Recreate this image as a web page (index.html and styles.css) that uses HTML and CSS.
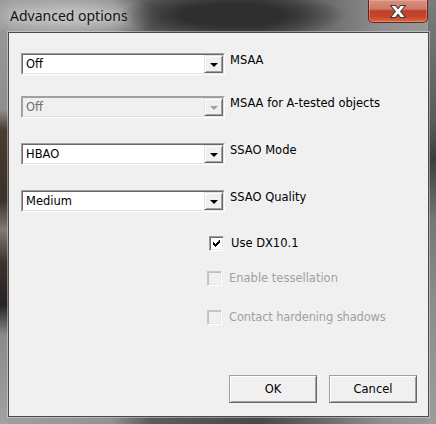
FILE: index.html
```html
<!DOCTYPE html>
<html>
<head>
<meta charset="utf-8">
<link rel="stylesheet" href="styles.css">
</head>
<body>
<div class="window">
  <div class="titlebar">
    <span class="title">Advanced options</span>
    <div class="close">
      <svg width="18" height="15" viewBox="0 0 18 15"><path d="M1.5 1.5 H6.5 L9 4.6 L11.5 1.5 H16.5 L11.6 7.5 L16.5 13.5 H11.5 L9 10.4 L6.5 13.5 H1.5 L6.4 7.5 Z" fill="#fff" stroke="#3a3a3a" stroke-width="1.1" stroke-linejoin="round"/></svg>
    </div>
  </div>
  <div class="client">
    <div class="row r1">
      <div class="combo"><div class="combo-in"><span class="value">Off</span><span class="drop"><span class="tri"></span></span></div></div>
      <span class="label">MSAA</span>
    </div>
    <div class="row r2">
      <div class="combo disabled"><div class="combo-in"><span class="value">Off</span><span class="drop"><span class="tri"></span></span></div></div>
      <span class="label">MSAA for A-tested objects</span>
    </div>
    <div class="row r3">
      <div class="combo"><div class="combo-in"><span class="value">HBAO</span><span class="drop"><span class="tri"></span></span></div></div>
      <span class="label">SSAO Mode</span>
    </div>
    <div class="row r4">
      <div class="combo"><div class="combo-in"><span class="value">Medium</span><span class="drop"><span class="tri"></span></span></div></div>
      <span class="label">SSAO Quality</span>
    </div>
    <div class="check c1">
      <span class="box"><svg width="7" height="7" viewBox="0 0 7 7"><path d="M6 0h1v3h-1v1h-1v1h-1v1h-1v1h-1v-1h-1v-1h-1v-3h1v1h1v1h1v-1h1v-1h1z" fill="#000"/></svg></span>
      <span class="ctext">Use DX10.1</span>
    </div>
    <div class="check c2 off">
      <span class="box"></span>
      <span class="ctext">Enable tessellation</span>
    </div>
    <div class="check c3 off">
      <span class="box"></span>
      <span class="ctext">Contact hardening shadows</span>
    </div>
    <div class="buttons">
      <div class="btn">OK</div>
      <div class="btn">Cancel</div>
    </div>
  </div>
</div>
</body>
</html>
```
FILE: styles.css
```css
html, body {
  margin: 0;
  padding: 0;
  background: #8a8a8a;
}
.window {
  width: 436px;
  height: 424px;
  box-sizing: border-box;
  padding: 0 7px 7px 8px;
  display: flex;
  flex-direction: column;
  background:
    radial-gradient(ellipse 115px 24px at 232px 15px, #2f2f2f 45%, rgba(47,47,47,0) 100%),
    radial-gradient(ellipse 95px 22px at 68px 16px, rgba(190,190,190,0.85) 30%, rgba(190,190,190,0) 100%),
    linear-gradient(to bottom, #9a9a9a 0, #8e8e8e 110px, #4a3d31 130px, #3b3128 200px, #7f7a74 230px, #3b3430 262px, #262322 305px, #8a8a8a 335px, #a2a2a2 100%) left top / 8px 100% no-repeat,
    linear-gradient(to bottom, #7c7c7c 0, #5b5b5b 120px, #3d3d3d 160px, #767676 220px, #8c8c8c 300px, #9c9c9c 100%) right top / 8px 100% no-repeat,
    linear-gradient(to right, #9f9f9f 0, #929292 110px, #5c5c5c 150px, #474747 260px, #6e6e6e 330px, #8e8e8e 380px, #9a9a9a 100%);
}
.titlebar {
  height: 32px;
  display: flex;
  align-items: flex-start;
  margin-left: -8px;
  margin-right: -7px;
}
.title {
  font-family: "Noto Sans", "Open Sans", sans-serif;
  font-size: 14px;
  color: #141414;
  margin-left: 10px;
  margin-top: 6px;
  line-height: 19px;
  text-shadow: 0 0 8px rgba(255,255,255,0.7);
}
.close {
  margin-left: auto;
  margin-right: 8px;
  width: 60px;
  height: 23px;
  box-sizing: border-box;
  border: 1px solid #5a2a20;
  border-top: none;
  border-radius: 0 0 5px 5px;
  background: linear-gradient(to bottom, #d9907f 0%, #cf7a68 40%, #bd3f27 50%, #c4452c 75%, #e0673e 100%);
  box-shadow: inset 0 0 0 1px rgba(255,200,190,0.35);
  display: flex;
  align-items: center;
  justify-content: center;
}
.close svg { display: block; }
.client {
  flex: 1;
  background: #f0f0f0;
  border: 1px solid #4b4b4b;
  box-shadow: 0 0 0 1px rgba(230,230,230,0.45);
  display: flex;
  flex-direction: column;
  font-family: "DejaVu Sans", Verdana, sans-serif;
  font-size: 11.5px;
  color: #000;
}
.row {
  display: flex;
  align-items: flex-start;
  margin-left: 12px;
}
.r1 { margin-top: 20px; }
.r2 { margin-top: 21px; }
.r3 { margin-top: 25px; }
.r4 { margin-top: 25px; }
.combo {
  width: 204px;
  height: 22px;
  box-sizing: border-box;
  border-top: 1px solid #a0a0a0;
  border-left: 1px solid #a0a0a0;
  border-right: 1px solid #ffffff;
  border-bottom: 1px solid #ffffff;
}
.combo-in {
  height: 100%;
  box-sizing: border-box;
  border-top: 1px solid #696969;
  border-left: 1px solid #696969;
  border-right: 1px solid #e3e3e3;
  border-bottom: 1px solid #e3e3e3;
  background: #fff;
  display: flex;
  align-items: center;
}
.value {
  flex: 1;
  padding-left: 3px;
  line-height: 18px;
}
.drop {
  width: 19px;
  height: 100%;
  box-sizing: border-box;
  background: #f0f0f0;
  border-top: 1px solid #e3e3e3;
  border-left: 1px solid #e3e3e3;
  border-right: 1px solid #696969;
  border-bottom: 1px solid #696969;
  box-shadow: inset 1px 1px 0 #fff, inset -1px -1px 0 #a0a0a0;
  display: flex;
  align-items: center;
  justify-content: center;
}
.tri {
  width: 0;
  height: 0;
  border-left: 4px solid transparent;
  border-right: 4px solid transparent;
  border-top: 4px solid #000;
  margin-top: 1px;
}
.disabled .combo-in { background: #f0f0f0; border-top-color: #a0a0a0; border-left-color: #a0a0a0; }
.disabled .value { color: #6d6d6d; }
.disabled .tri { border-top-color: #a0a0a0; }
.label {
  margin-left: 5px;
  line-height: 15px;
}
.check {
  display: flex;
  align-items: center;
  margin-left: 200px;
}
.c1 { margin-top: 24px; }
.c2 { margin-top: 20px; margin-left: 198px; }
.c3 { margin-top: 24px; margin-left: 198px; }
.box {
  width: 15px;
  height: 15px;
  box-sizing: border-box;
  background: #fff;
  border-top: 1px solid #a0a0a0;
  border-left: 1px solid #a0a0a0;
  border-right: 1px solid #fff;
  border-bottom: 1px solid #fff;
  box-shadow: inset 1px 1px 0 #696969, inset -1px -1px 0 #e3e3e3;
  display: flex;
  align-items: center;
  justify-content: center;
}
.box svg { display: block; }
.ctext {
  margin-left: 7px;
  line-height: 15px;
}
.c3 .ctext { letter-spacing: -0.15px; }
.off .box {
  background: #f0f0f0;
  border-top-color: #c8c8c8;
  border-left-color: #c8c8c8;
  box-shadow: inset 1px 1px 0 #c0c0c0, inset -1px -1px 0 #e8e8e8;
}
.off .ctext { color: #a0a0a0; }
.buttons {
  margin-top: auto;
  display: flex;
  justify-content: flex-end;
  gap: 12px;
  padding-right: 11px;
  padding-bottom: 13px;
}
.btn {
  width: 88px;
  height: 28px;
  box-sizing: border-box;
  background: #f0f0f0;
  border-top: 1px solid #a0a0a0;
  border-left: 1px solid #a0a0a0;
  border-right: 1px solid #696969;
  border-bottom: 1px solid #696969;
  box-shadow: inset 1px 1px 0 #fff, inset -1px -1px 0 #a0a0a0;
  display: flex;
  align-items: center;
  justify-content: center;
}
```
